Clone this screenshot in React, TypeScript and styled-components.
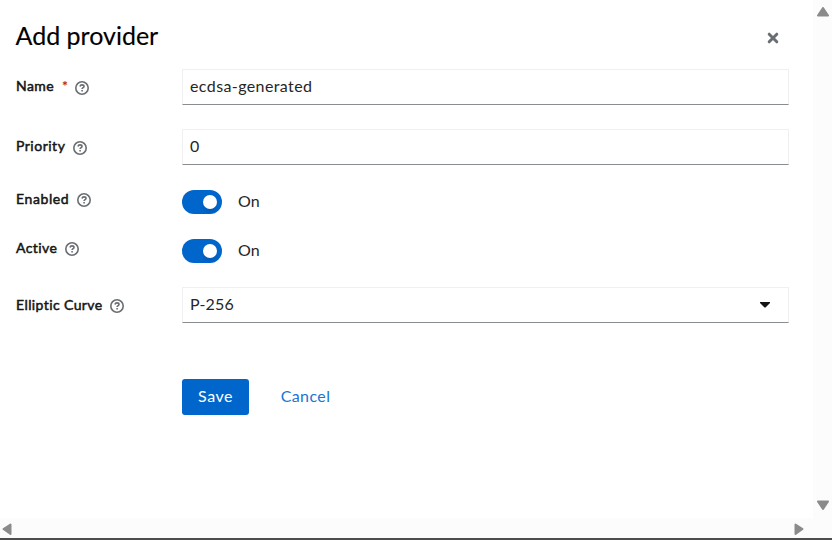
import React from "react";
import styled, { createGlobalStyle } from "styled-components";

const GlobalStyle = createGlobalStyle`
  * { box-sizing: border-box; }
  body { margin: 0; background: #fff; font-family: Lato, "Noto Sans", sans-serif; overflow: hidden; }
`;
const Frame = styled.div`
  width: 832px; height: 540px; display: grid;
  grid-template: 518px 20px / 813px 19px;
  border-bottom: 2px solid #4d4d50;
  background: #fcfcfc;
`;
const Dialog = styled.main`
  background: #fff; padding: 19px 24px 0 16px;
`;
const Header = styled.header`
  display: flex; justify-content: space-between; height: 50px;
`;
const Title = styled.h1`
  margin: 0 0 0 -0.5px; font-size: 25px; line-height: 33px; font-weight: 400; color: #000;
  letter-spacing: 0; -webkit-text-stroke: 0.15px #000;
`;
const CloseButton = styled.button`
  border: 0; background: none; padding: 0; width: 12px; height: 12px; margin: 13px 10px 0 0; display: flex;
`;
const Row = styled.div<{ $height: number }>`
  display: grid; grid-template-columns: 166px 607px; height: ${p => p.$height}px; align-items: start;
`;
const Label = styled.label<{ $track: number; $top: number }>`
  display: flex; align-items: center; margin-top: ${p => p.$top}px; height: 20px;
  font-size: 14px; line-height: 20px; font-weight: 400; color: #151515; white-space: nowrap;
  -webkit-text-stroke: 0.5px #151515; letter-spacing: ${p => p.$track}px;
`;
const Required = styled.span`
  color: #c9190b; font-size: 14px; margin-left: 8px; width: 6px; letter-spacing: 0;
  -webkit-text-stroke: 0.2px #c9190b;
`;
const HelpSvg = styled.svg<{ $drop: number }>`
  margin-top: ${p => p.$drop}px; flex: none;
`;
const LabelText = styled.span<{ $width: number }>`
  display: flex; width: ${p => p.$width}px; flex: none;
`;
const Field = styled.div<{ $track: number }>`
  height: 36px; border: 1px solid #f0f0f0; border-bottom-color: #8a8d90;
  display: flex; align-items: center; justify-content: space-between; padding: 0 18px 2px 7px;
  font-size: 16px; line-height: 24px; color: #262626; letter-spacing: ${p => p.$track}px;
`;
const Caret = styled.svg`
  margin-top: 1px;
`;
const Toggle = styled.div`
  display: flex; align-items: center; gap: 16px; height: 24px; font-size: 16px; color: #262626;
`;
const State = styled.span`
  line-height: 24px; padding-bottom: 3px;
`;
const Track = styled.span`
  width: 40px; height: 24px; border-radius: 12px; background: #06c; display: flex;
  justify-content: flex-end; align-items: center; padding-right: 5px;
`;
const Knob = styled.span`
  width: 14px; height: 14px; border-radius: 50%; background: #fff; box-shadow: 0 3px 4px rgba(3,3,3,.12);
`;
const Actions = styled.div`
  display: flex; margin-left: 166px; padding-top: 8px; gap: 16px;
`;
const Button = styled.button<{ $primary?: boolean }>`
  height: 36px; width: ${p => (p.$primary ? 67 : 81)}px; border: 0; border-radius: 3px; padding: 0 0 2px;
  background: ${p => (p.$primary ? "#06c" : "transparent")}; color: ${p => (p.$primary ? "#fff" : "#1a75d1")};
  font: 400 16px/24px Lato, sans-serif; letter-spacing: ${p => (p.$primary ? 0.5 : 0.4)}px;
`;
const VerticalBar = styled.div`
  display: flex; flex-direction: column; justify-content: space-between; align-items: flex-start; padding: 7px 0 8px 2.5px;
`;
const HorizontalBar = styled.div`
  display: flex; justify-content: space-between; align-items: center; padding: 2px 9.5px 0 1.5px;
`;

const HelpIcon = ({ drop }: { drop: number }) => (
  <HelpSvg $drop={drop} width="14" height="14" viewBox="0 0 14 14" fill="none" stroke="#6a6e73">
    <circle cx="7" cy="7" r="6.2" strokeWidth="1.6" />
    <path d="M5 5.5C5.2 4.4 6 3.9 7 3.9c1.2 0 2 .6 2 1.5 0 1.3-1.9 1.3-1.9 2.700" strokeWidth="1.600" />
    <path d="M6.300 9.700h1.600" strokeWidth="1.600" />
  </HelpSvg>
);

type FieldLabelProps = {
  text: string; width: number; track: number; top: number; drop?: number; required?: boolean;
};

const FieldLabel = ({ text, width, track, top, drop = 3, required }: FieldLabelProps) => (
  <Label $track={track} $top={top}>
    <LabelText $width={width}>
      {text}
      {required && <Required>*</Required>}
    </LabelText>
    <HelpIcon drop={drop} />
  </Label>
);

const Arrow = ({ dir }: { dir: "up" | "down" | "left" | "right" }) => {
  const vertical = dir === "up" || dir === "down";
  const d = {
    up: "M7 1 12 8.5H2Z", down: "M2 1.5H12L7 9Z",
    left: "M1.5 6 8.5 1.5V11Z", right: "M1.5 1.5V11L8.5 6Z",
  }[dir];
  return (
    <svg width={vertical ? 14 : 10} height={vertical ? 10 : 13}>
      <path d={d} fill="#8b8b8b" stroke="#8b8b8b" strokeWidth="2" strokeLinejoin="round" />
    </svg>
  );
};

const Switch = () => (
  <Toggle><Track><Knob /></Track><State>On</State></Toggle>
);

export default function App() {
  return (
    <>
      <GlobalStyle />
      <Frame>
        <Dialog>
          <Header>
            <Title>Add provider</Title>
            <CloseButton aria-label="Close">
              <svg width="12" height="12"><path d="M2.2 2.2 9.8 9.8M9.8 2.2 2.2 9.8" stroke="#6a6e73" strokeWidth="3" strokeLinecap="round" /></svg>
            </CloseButton>
          </Header>
          <Row $height={60}>
            <FieldLabel text="Name" width={59} track={0.4} top={7} required />
            <Field $track={0.4}>ecdsa-generated</Field>
          </Row>
          <Row $height={61}>
            <FieldLabel text="Priority" width={57} track={0.5} top={7} />
            <Field $track={0}>0</Field>
          </Row>
          <Row $height={49}>
            <FieldLabel text="Enabled" width={61} track={0.6} top={-1} drop={1} />
            <Switch />
          </Row>
          <Row $height={48}>
            <FieldLabel text="Active" width={49} track={0.4} top={-1} drop={1} />
            <Switch />
          </Row>
          <Row $height={84}>
            <FieldLabel text="Elliptic Curve" width={94} track={0.4} top={8} drop={1} />
            <Field $track={0.2}>P-256<Caret width="10" height="6"><path d="M0 0H10V1L5.5 5.5H4.5L0 1Z" fill="#151515" /></Caret></Field>
          </Row>
          <Actions><Button $primary>Save</Button><Button>Cancel</Button></Actions>
        </Dialog>
        <VerticalBar><Arrow dir="up" /><Arrow dir="down" /></VerticalBar>
        <HorizontalBar><Arrow dir="left" /><Arrow dir="right" /></HorizontalBar>
      </Frame>
    </>
  );
}
